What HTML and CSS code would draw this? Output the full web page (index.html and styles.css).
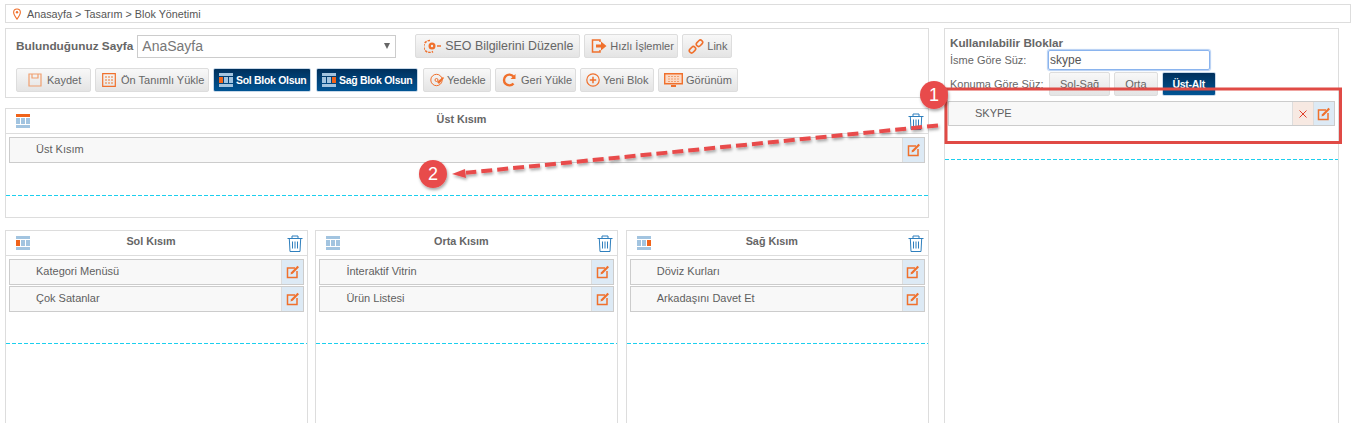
FILE: index.html
```html
<!DOCTYPE html>
<html lang="tr">
<head>
<meta charset="utf-8">
<title>Blok Yönetimi</title>
<link rel="stylesheet" href="styles.css">
</head>
<body>
<svg width="0" height="0" class="defs">
  <defs>
    <symbol id="i-edit" viewBox="0 0 14 14"><path d="M9 3H1.500v9.500h9.500V6" fill="none" stroke="#f0702c" stroke-width="1.500"/><path d="M4.500 9.500l.6-2.300L11.500.8l1.500 1.500-6.300 6.500z" fill="#f0702c"/></symbol>
    <symbol id="i-trash" viewBox="0 0 16 17"><path d="M.5 3.500h15M5 3.500V1h6v2.500M2.300 3.500l.7 13h10l.7-13M5.500 6.500v7M8 6.500v7M10.500 6.500v7" fill="none" stroke="#2f7fbd" stroke-width="1"/></symbol>
    <symbol id="i-layout" viewBox="0 0 14 14"><rect width="14" height="3" fill="var(--t, #a2c4e0)"/><rect y="4" width="4" height="6" fill="var(--l, #a2c4e0)"/><rect x="5" y="4" width="4" height="6" fill="#a2c4e0"/><rect x="10" y="4" width="4" height="6" fill="var(--r, #a2c4e0)"/><rect y="11" width="14" height="3" fill="#a2c4e0"/></symbol>
  </defs>
</svg>

<nav class="crumb">
  <svg class="crumb-pin" viewBox="0 0 10 14" width="8" height="12"><path d="M5 .7a4.200 4.200 0 0 0-4.200 4.200C.8 8 5 13.300 5 13.300S9.200 8 9.200 4.900A4.200 4.200 0 0 0 5 .7z" fill="none" stroke="#f0702c" stroke-width="1.400"/><circle cx="5" cy="4.900" r="1.500" fill="#f0702c"/></svg>
  <span>Anasayfa &gt; Tasarım &gt; Blok Yönetimi</span>
</nav>

<div class="layout">
  <main class="main">
    <section class="panel toolbar">
      <div class="tool-row">
        <label class="page-label">Bulunduğunuz Sayfa</label>
        <div class="select"><span>AnaSayfa</span><i class="caret"></i></div>
        <button class="btn btn-seo"><svg viewBox="0 0 18 14" width="18" height="14"><path d="M6 1.500a6 6 0 1 0 3 11" fill="none" stroke="#f0702c" stroke-width="1.500" stroke-dasharray="2.500 1"/><circle cx="8" cy="7" r="3.500" fill="#f0702c"/><circle cx="8" cy="7" r="1.200" fill="#eee"/><path d="M13 7h4" stroke="#f0702c" stroke-width="1.500"/></svg>SEO Bilgilerini Düzenle</button>
        <button class="btn btn-quick"><svg viewBox="0 0 16 14" width="16" height="14"><path d="M9 3V1H1.500v12H9v-2" fill="none" stroke="#f0702c" stroke-width="1.500"/><path d="M5 5.500h5V2.500L15.500 7 10 11.500v-3H5z" fill="#f0702c"/></svg>Hızlı İşlemler</button>
        <button class="btn btn-link"><svg viewBox="0 0 16 15" width="16" height="15"><g fill="none" stroke="#f0702c" stroke-width="1.600"><rect x="1" y="8.500" width="7" height="4.500" rx="2.200" transform="rotate(-45 4.500 10.750)"/><rect x="8" y="2" width="7" height="4.500" rx="2.200" transform="rotate(-45 11.500 4.250)"/></g></svg>Link</button>
      </div>
      <div class="tool-row">
        <button class="btn btn-save"><svg viewBox="0 0 14 14" width="14" height="14"><path d="M1 1h12v12H1zM4 1v4h6V1" fill="none" stroke="#f0a070" stroke-width="1.200"/></svg>Kaydet</button>
        <button class="btn btn-wide"><svg viewBox="0 0 14 14" width="14" height="14"><path d="M.7.7h12.600v12.600H.7z" fill="none" stroke="#f0702c" stroke-width="1.200"/><path d="M3 4h8M3 7h8M3 10h8" stroke="#f0a070" stroke-width="1.500" stroke-dasharray="2 1"/></svg>Ön Tanımlı Yükle</button>
        <button class="btn btn-dark btn-left"><svg class="layout-ico ico-left" width="14" height="14"><use href="#i-layout"/></svg>Sol Blok Olsun</button>
        <button class="btn btn-dark btn-right"><svg class="layout-ico ico-right" width="14" height="14"><use href="#i-layout"/></svg>Sağ Blok Olsun</button>
        <button class="btn btn-backup"><svg viewBox="0 0 14 14" width="14" height="14"><circle cx="6.500" cy="7" r="5.700" fill="none" stroke="#f0702c" stroke-width="1"/><circle cx="6.500" cy="7" r="1.500" fill="none" stroke="#f0702c"/><path d="M7 9l6-5 1 1-5 6z" fill="#f0702c"/></svg>Yedekle</button>
        <button class="btn btn-back"><svg viewBox="0 0 14 14" width="14" height="14"><path d="M11.500 10.500a5.400 5.400 0 1 1 0-7" fill="none" stroke="#f0702c" stroke-width="2.400"/><path d="M13.500 1v5h-5z" fill="#f0702c"/></svg>Geri Yükle</button>
        <button class="btn btn-new"><svg viewBox="0 0 14 14" width="14" height="14"><circle cx="7" cy="7" r="6.200" fill="none" stroke="#f0702c" stroke-width="1.200"/><path d="M7 3.800v6.400M3.800 7h6.400" stroke="#f0702c" stroke-width="1.500"/></svg>Yeni Blok</button>
        <button class="btn btn-view"><svg viewBox="0 0 19 14" width="19" height="14"><path d="M.7.700h17.600v10H.7z" fill="#fbd9c5" stroke="#f0702c" stroke-width="1.400"/><path d="M4 3.500h11M4 6h11M4 8.500h11" stroke="#f0a070" stroke-dasharray="2 1"/><path d="M7 13h5" stroke="#f0702c" stroke-width="2"/></svg>Görünüm</button>
      </div>
    </section>

    <section class="panel zone zone-top">
      <header class="zone-head">
        <svg class="layout-ico ico-top" width="14" height="14"><use href="#i-layout"/></svg>
        <h3>Üst Kısım</h3>
        <svg class="trash" width="16" height="17"><use href="#i-trash"/></svg>
      </header>
      <div class="zone-body">
        <div class="row"><span>Üst Kısım</span><a class="act"><svg width="14" height="14"><use href="#i-edit"/></svg></a></div>
      </div>
      <div class="drop"></div>
    </section>

    <div class="columns">
      <section class="panel zone">
        <header class="zone-head">
          <svg class="layout-ico ico-left" width="14" height="14"><use href="#i-layout"/></svg>
          <h3>Sol Kısım</h3>
          <svg class="trash" width="16" height="17"><use href="#i-trash"/></svg>
        </header>
        <div class="zone-body zone-body-col">
          <div class="row"><span>Kategori Menüsü</span><a class="act"><svg width="14" height="14"><use href="#i-edit"/></svg></a></div>
          <div class="row"><span>Çok Satanlar</span><a class="act"><svg width="14" height="14"><use href="#i-edit"/></svg></a></div>
        </div>
        <div class="drop"></div>
      </section>
      <section class="panel zone">
        <header class="zone-head">
          <svg class="layout-ico" width="14" height="14"><use href="#i-layout"/></svg>
          <h3>Orta Kısım</h3>
          <svg class="trash" width="16" height="17"><use href="#i-trash"/></svg>
        </header>
        <div class="zone-body zone-body-col">
          <div class="row"><span>İnteraktif Vitrin</span><a class="act"><svg width="14" height="14"><use href="#i-edit"/></svg></a></div>
          <div class="row"><span>Ürün Listesi</span><a class="act"><svg width="14" height="14"><use href="#i-edit"/></svg></a></div>
        </div>
        <div class="drop"></div>
      </section>
      <section class="panel zone">
        <header class="zone-head">
          <svg class="layout-ico ico-right" width="14" height="14"><use href="#i-layout"/></svg>
          <h3>Sağ Kısım</h3>
          <svg class="trash" width="16" height="17"><use href="#i-trash"/></svg>
        </header>
        <div class="zone-body zone-body-col">
          <div class="row"><span>Döviz Kurları</span><a class="act"><svg width="14" height="14"><use href="#i-edit"/></svg></a></div>
          <div class="row"><span>Arkadaşını Davet Et</span><a class="act"><svg width="14" height="14"><use href="#i-edit"/></svg></a></div>
        </div>
        <div class="drop"></div>
      </section>
    </div>
  </main>

  <aside class="panel side">
    <h2>Kullanılabilir Bloklar</h2>
    <div class="filter filter-name"><label>İsme Göre Süz:</label><div class="input">skype</div></div>
    <div class="filter filter-pos"><label>Konuma Göre Süz:</label>
      <button class="btn btn-plain">Sol-Sağ</button>
      <button class="btn btn-plain">Orta</button>
      <button class="btn btn-plain btn-dark">Üst-Alt</button>
    </div>
    <div class="row row-side"><span>SKYPE</span><a class="act act-del"><svg viewBox="0 0 8 8" width="8" height="8"><path d="M.5.500l7 7M7.500.500l-7 7" stroke="#e0402a" stroke-width="1"/></svg></a><a class="act"><svg width="14" height="14"><use href="#i-edit"/></svg></a></div>
    <div class="drop drop-side"></div>
  </aside>
</div>

<svg class="annot" width="1353" height="423" viewBox="0 0 1353 423">
  <defs>
    <filter id="sh" x="-30%" y="-30%" width="160%" height="160%"><feDropShadow dx="1" dy="2" stdDeviation="1.500" flood-color="#000" flood-opacity=".35"/></filter>
  </defs>
  <rect x="946" y="89" width="394.500" height="53.500" fill="none" stroke="#e04a45" stroke-width="3"/>
  <g filter="url(#sh)">
    <path d="M938 125.500L466 172.800" fill="none" stroke="#e84c4c" stroke-width="4" stroke-dasharray="11 5"/>
    <path d="M452 174l13-5 1 9z" fill="#e84c4c"/>
    <circle cx="934" cy="95" r="14" fill="#e84c4c"/>
    <circle cx="433" cy="174" r="14" fill="#e84c4c"/>
  </g>
  <text x="934" y="101" class="annot-num">1</text>
  <text x="433" y="180" class="annot-num">2</text>
</svg>
</body>
</html>
```

FILE: styles.css
```css
* { box-sizing: border-box; }
html, body { margin: 0; height: 423px; overflow: hidden; background: #fff; }
body { position: relative; font: 11px "Liberation Sans", Arial, sans-serif; color: #666; padding: 4px 0 0 5px; }
.defs { position: absolute; }

.crumb { height: 19px; width: 1346px; border: 1px solid #ddd; display: flex; align-items: center; padding-left: 7px; gap: 6px; font-size: 10.800px; color: #555; }
.crumb-pin { flex: none; }

.layout { display: flex; gap: 15px; margin-top: 5px; align-items: flex-start; }
.main { width: 924px; flex: none; display: flex; flex-direction: column; }
.panel { border: 1px solid #ddd; background: #fff; }

.toolbar { height: 70px; padding: 5px 10px 0; display: flex; flex-direction: column; gap: 10px; }
.tool-row { display: flex; align-items: center; gap: 4px; height: 24px; }
.page-label { font-weight: bold; font-size: 11.800px; color: #666; }
.select { width: 259px; height: 23px; border: 1px solid #ccc; font-size: 14px; padding-left: 4px; margin-right: 15px; display: flex; align-items: center; justify-content: space-between; color: #777; }
.caret { width: 0; height: 0; margin-right: 5px; border: 3.500px solid transparent; border-top: 6px solid #666; border-bottom: 0; }

.btn { height: 24px; padding: 0 0 0 6px; flex: none; border: 1px solid #ddd; border-radius: 2px; background: linear-gradient(#f8f8f8, #e4e4e4); color: #666; font: 11px "Liberation Sans", Arial, sans-serif; display: inline-flex; align-items: center; gap: 3px; white-space: nowrap; }
.btn-seo { width: 165px; font-size: 12.400px; padding-left: 8px; }
.btn-quick { width: 94px; }
.btn-link { width: 50px; padding-left: 5px; }
.btn-save { gap: 5px; width: 75px; padding-left: 11px; }
.btn-wide { width: 114px; gap: 5px; }
.btn-left { width: 98px; padding-left: 5px; }
.btn-right { width: 102px; padding-left: 5px; margin-left: 1px; }
.btn-backup { width: 68px; margin-left: 1px; }
.btn-back { width: 81px; gap: 5px; padding-left: 6px; }
.btn-new { width: 74px; padding-left: 5px; }
.btn-view { width: 80px; padding-left: 5px; }
.btn-dark { background: linear-gradient(#00305c, #005494); border-color: #c8d8e8; color: #fff; font-weight: bold; font-size: 10.500px; letter-spacing: -.3px; }
.layout-ico { --t: #a2c4e0; --l: #a2c4e0; --r: #a2c4e0; flex: none; }
.ico-left { --l: #f0631a; }
.ico-right { --r: #f0631a; }
.ico-top { --t: #f0631a; }

.zone { display: flex; flex-direction: column; min-width: 0; }
.zone-top { height: 110px; margin-top: 10px; }
.zone-head { height: 25px; flex: none; border-bottom: 1px solid #ddd; display: flex; align-items: center; justify-content: space-between; padding: 0 4px 0 10px; }
.zone-head h3 { margin: 0 15px 4px 0; font-size: 10.800px; color: #666; }
.trash { flex: none; }
.zone-body { padding: 3px 3px 0; height: 61px; display: flex; flex-direction: column; gap: 1px; }
.zone-body-col { height: 87px; }
.row { height: 26px; flex: none; border: 1px solid #ccc; background: #f8f8f8; display: flex; align-items: center; padding-left: 26px; font-size: 11px; color: #5f5f5f; }
.row span { flex: 1; padding-bottom: 2px; }
.act { width: 22px; height: 100%; background: #ddeaf5; border-left: 1px solid #ddd; display: flex; align-items: center; justify-content: center; flex: none; }
.act-del { background: #f7e9e2; }
.drop { height: 1px; background: repeating-linear-gradient(90deg, #1ccfee 0 4px, transparent 4px 6px); }

.columns { display: grid; grid-template-columns: repeat(3, 303px); gap: 7.400px; margin-top: 12px; height: 200px; }
.columns .zone { height: 200px; }

.side { width: 395px; height: 400px; padding: 8px 3px 0; flex: none; }
.side h2 { margin: 0 0 0 2px; font-size: 11.700px; color: #666; line-height: 12px; }
.filter { display: flex; align-items: center; }
.filter label { width: 100px; padding-left: 2px; flex: none; font-size: 11px; }
.filter-name { height: 20px; margin-top: 1px; }
.input { width: 162px; height: 20px; border: 1px solid #8ab4ee; border-radius: 2px; box-shadow: 0 0 1px 1px #b5cff3; font-size: 12px; padding-left: 1px; line-height: 18px; color: #555; }
.filter-pos { margin-top: 2px; gap: 4px; height: 24px; }
.filter-pos label { width: 97px; }
.btn-plain { padding: 0 10px; }
.row-side { margin-top: 5px; width: 387px; height: 25px; }
.row-side .act { width: 21px; }
.drop-side { margin-top: 33px; margin-left: -3px; margin-right: -3px; }

.annot { position: absolute; left: 0; top: 0; pointer-events: none; }
.annot-num { font: 18px "Liberation Sans", Arial, sans-serif; fill: #fff; text-anchor: middle; }
```
